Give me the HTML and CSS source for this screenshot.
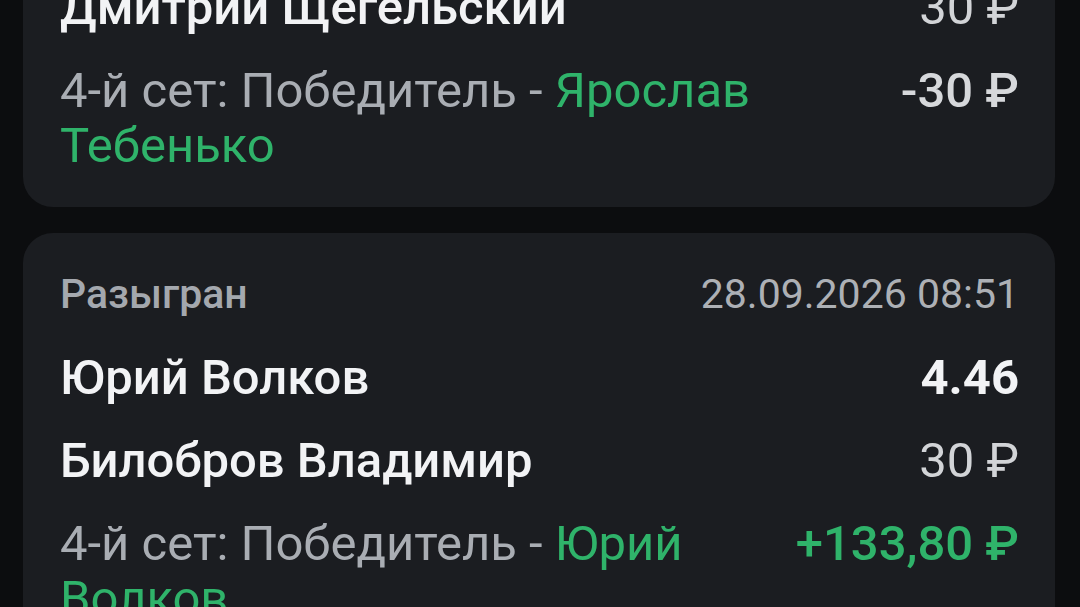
FILE: index.html
```html
<!DOCTYPE html>
<html lang="ru">
<head>
<meta charset="utf-8">
<title>Ставки</title>
<link rel="stylesheet" href="styles.css">
</head>
<body>
<div class="list">
  <div class="card">
    <div class="row">
      <span class="name">Дмитрий Щегельский</span>
      <span class="stake">30 ₽</span>
    </div>
    <div class="row">
      <span class="desc">4-й сет: Победитель - <span class="pick">Ярослав Тебенько</span></span>
      <span class="result loss">-30 ₽</span>
    </div>
  </div>
  <div class="card">
    <div class="row head">
      <span class="status">Разыгран</span>
      <span class="date">28.09.2026 08:51</span>
    </div>
    <div class="row">
      <span class="name">Юрий Волков</span>
      <span class="odds">4.46</span>
    </div>
    <div class="row">
      <span class="name">Билобров Владимир</span>
      <span class="stake">30 ₽</span>
    </div>
    <div class="row">
      <span class="desc">4-й сет: Победитель - <span class="pick">Юрий Волков</span></span>
      <span class="result win">+133,80 ₽</span>
    </div>
  </div>
</div>
</body>
</html>
```
FILE: styles.css
```css
html, body {
  margin: 0;
  padding: 0;
  background: #0c0d0f;
  height: 100%;
  overflow: hidden;
}
body {
  font-family: Roboto, "Noto Sans", sans-serif;
  color: #f1f2f4;
}
.list {
  display: flex;
  flex-direction: column;
  gap: 26px;
  margin: -54px 25px 0 23px;
}
.card {
  background: #1b1d21;
  border-radius: 30px;
  padding: 34px 36px 34px 37px;
  display: flex;
  flex-direction: column;
  gap: 28px;
}
.row {
  display: flex;
  justify-content: space-between;
  align-items: flex-start;
  font-size: 49px;
  line-height: 55px;
}
.row.head {
  font-size: 41px;
}
.status {
  font-weight: 500;
  color: #a4a8ae;
}
.date {
  color: #adb0b5;
}
.name {
  font-weight: 500;
  color: #f2f3f5;
}
.odds {
  font-weight: 700;
  color: #f2f3f5;
}
.stake {
  color: #d2d4d7;
}
.desc {
  flex: 1;
  color: #a9adb3;
  margin-right: 40px;
}
.pick {
  color: #2fb36a;
}
.result {
  font-weight: 500;
  white-space: nowrap;
}
.result.loss {
  color: #d6d8db;
}
.result.win {
  color: #2fb36a;
}
```
